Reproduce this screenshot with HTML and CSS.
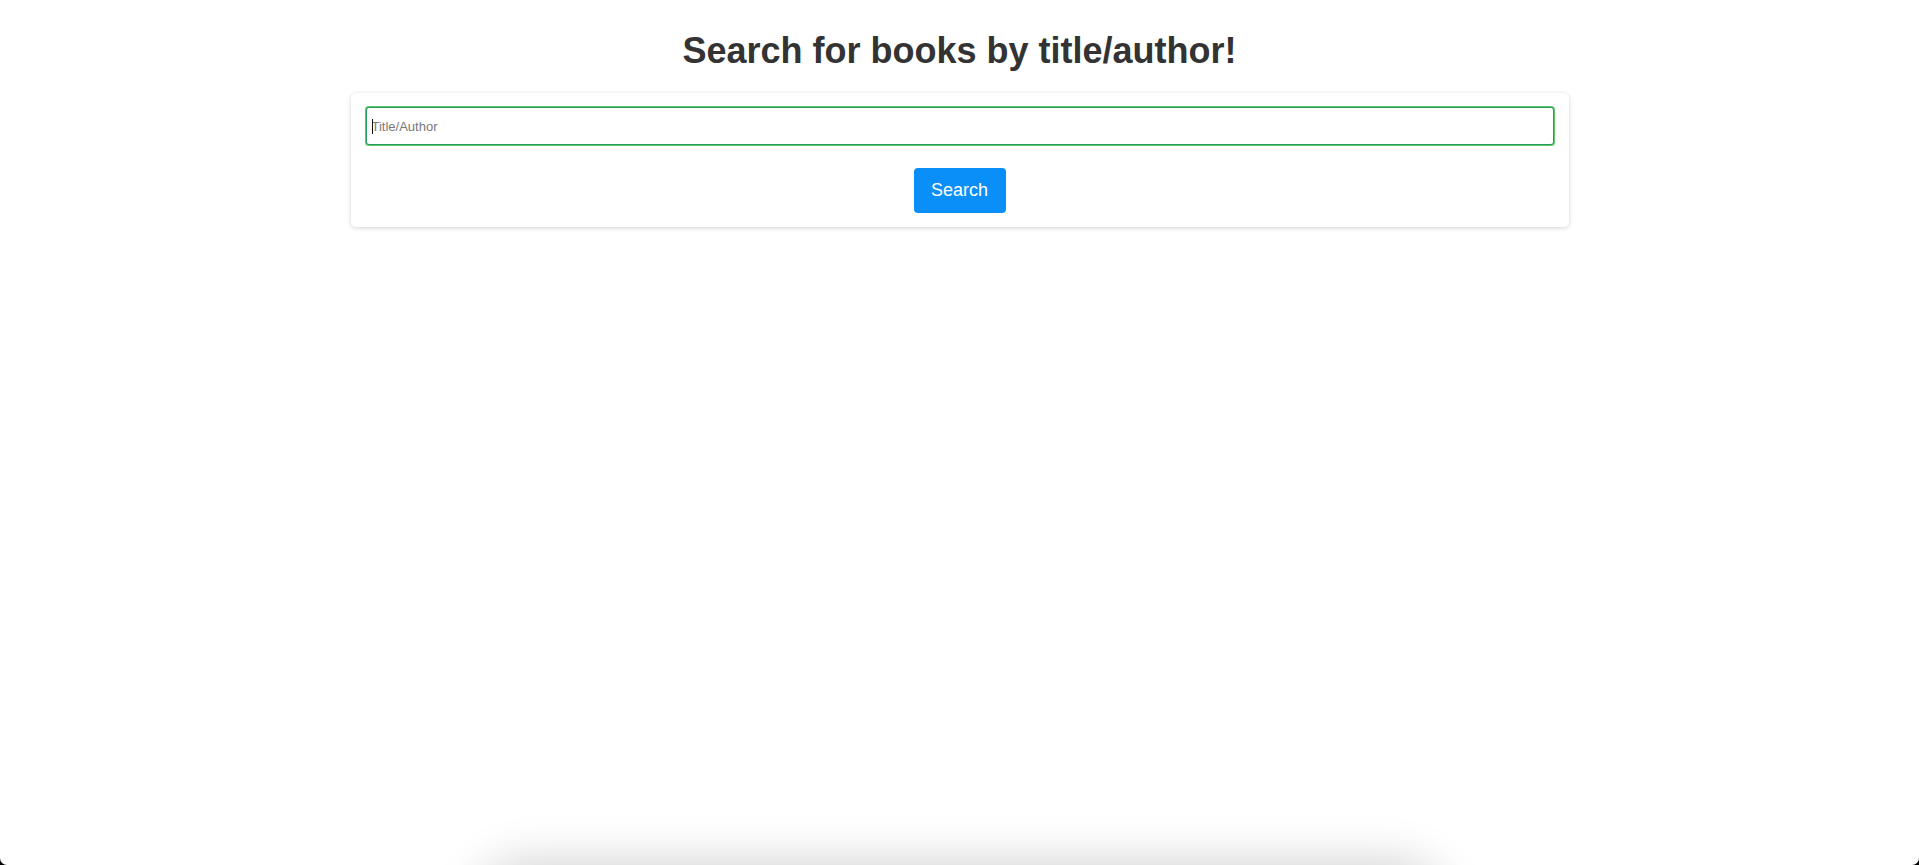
FILE: index.html
```html
<!DOCTYPE html>
<html lang="en">
<head>
<meta charset="utf-8">
<title>Book Search</title>
<link rel="stylesheet" href="styles.css">
</head>
<body>
<div class="page">
  <h1 class="title">Search for books by title/author!</h1>
  <form class="card" onsubmit="return false;">
    <div class="field">
      <input class="search-input" type="text" placeholder="Title/Author">
      <span class="caret"></span>
    </div>
    <div class="actions">
      <button class="search-btn" type="submit">Search</button>
    </div>
  </form>
  <div class="dock-shadow"></div>
</div>
</body>
</html>
```

FILE: styles.css
```css
html {
  background: #000;
  height: 100%;
}
body {
  margin: 0;
  height: 100%;
  font-family: "Liberation Sans", Arial, Helvetica, sans-serif;
  color: #333;
}
.page {
  position: relative;
  height: 100%;
  background: #fff;
  border-radius: 0 0 7px 7px;
  overflow: hidden;
  padding-top: 30px;
  box-sizing: border-box;
}
.title {
  margin: 0 0 22px;
  text-align: center;
  font-size: 36px;
  font-weight: bold;
  line-height: 41px;
  color: #333;
}
.card {
  width: 1218px;
  box-sizing: border-box;
  margin: 0 auto;
  padding: 14px 15px;
  background: #fff;
  border-radius: 5px;
  box-shadow: 0 1px 4px rgba(0, 0, 0, 0.18);
}
.field {
  position: relative;
}
.search-input {
  display: block;
  width: 100%;
  height: 38px;
  box-sizing: border-box;
  margin: 0;
  padding: 0 5px;
  border: 1px solid #2a9a5c;
  box-shadow: 0 0 0 1px #5cc46a;
  border-radius: 3px;
  outline: none;
  font-family: "Liberation Sans", Arial, sans-serif;
  font-size: 13px;
  color: #333;
  background: #fff;
}
.search-input::placeholder {
  color: #777;
}
.caret {
  position: absolute;
  left: 6px;
  top: 12px;
  width: 1px;
  height: 15px;
  background: #111;
}
.actions {
  display: flex;
  justify-content: center;
  margin-top: 23px;
}
.search-btn {
  width: 92px;
  height: 45px;
  border: none;
  border-radius: 4px;
  background: #0a8ef8;
  color: #fff;
  font-family: "Liberation Sans", Arial, sans-serif;
  font-size: 18px;
  padding: 0;
  cursor: pointer;
}
.dock-shadow {
  position: absolute;
  left: 490px;
  width: 940px;
  bottom: -70px;
  height: 60px;
  border-radius: 30px;
  box-shadow: 0 0 50px 10px rgba(0, 0, 0, 0.2);
}
```
